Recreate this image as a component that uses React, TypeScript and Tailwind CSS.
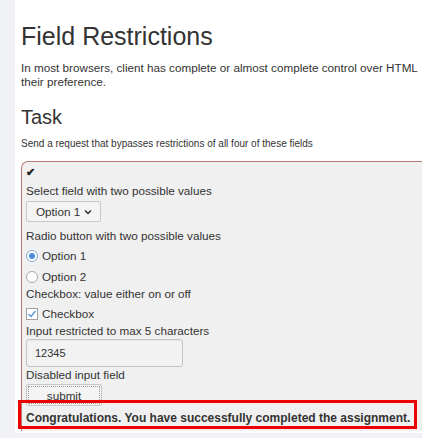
const font = { fontFamily: '"Liberation Sans", Arial, sans-serif' };

function Radio({ checked, label, first }: { checked?: boolean; label: string; first?: boolean }) {
  return (
    <div className={`flex h-[20px] items-center gap-[4px] ${first ? "mt-[2px]" : "mt-[1px]"}`}>
      <span
        className={`flex h-[12px] w-[12px] items-center justify-center rounded-full border bg-white ${
          checked ? "border-[#7aaee0]" : "border-[#a8a8a8]"
        }`}
      >
        {checked && <span className="h-[6px] w-[6px] rounded-full bg-[#4a90d9]" />}
      </span>
      <span>{label}</span>
    </div>
  );
}

export default function App() {
  return (
    <div className="flex h-[438px] w-[422px] overflow-hidden bg-[#f1f2f6]" style={font}>
      <div className="w-[15px] shrink-0" />
      <div className="relative h-[433px] flex-1 overflow-hidden rounded-bl-[4px] bg-white pl-[6px] text-[#333]">
        <h1 className="mt-[21px] text-[25px] font-normal leading-[30px] text-[#333]">Field Restrictions</h1>
        <p className="mt-[10px] whitespace-nowrap text-[11.7px] leading-[14px] text-[#333]">
          In most browsers, client has complete or almost complete control over HTML
          <br />
          their preference.
        </p>
        <h2 className="mt-[16px] text-[20px] font-normal leading-[24px] text-[#333]">Task</h2>
        <p className="mt-[8px] whitespace-nowrap text-[10px] leading-[14px]">
          Send a request that bypasses restrictions of all four of these fields
        </p>
        <div className="mt-[10px] w-[420px] rounded-tl-[7px] border border-r-0 border-b-0 border-[#b87878] bg-[#f0f0f0] pl-[4px] pt-[3px] text-[11.7px] leading-[16px]">
          <div className="h-[14px] text-[11px] font-bold leading-[14px] text-[#222]">✔</div>
          <div className="mt-[4px]">Select field with two possible values</div>
          <div className="mt-[2px] flex h-[21px] w-[75px] items-center gap-[4px] rounded-[2px] border border-[#c8c8c8] bg-[#f4f4f4] pl-[9px]">
            <span>Option 1</span>
            <svg width="8" height="6" viewBox="0 0 8 6">
              <path d="M1 1.5 L4 4.5 L7 1.5" fill="none" stroke="#333" strokeWidth="1.5" />
            </svg>
          </div>
          <div className="mt-[6px]">Radio button with two possible values</div>
          <Radio checked first label="Option 1" />
          <Radio label="Option 2" />
          <div className="-mt-[1px]">Checkbox: value either on or off</div>
          <div className="mt-[2px] flex h-[20px] items-center gap-[4px]">
            <span className="flex h-[12px] w-[12px] items-center justify-center border border-[#a0a0a0] bg-white">
              <svg width="10" height="10" viewBox="0 0 10 10">
                <path d="M1.5 5 L4 7.5 L8.5 2" fill="none" stroke="#4a90d9" strokeWidth="1.2" />
              </svg>
            </span>
            <span>Checkbox</span>
          </div>
          <div className="-mt-[1px]">Input restricted to max 5 characters</div>
          <div className="flex h-[28px] w-[157px] items-center rounded-[3px] border border-[#c4c4c4] bg-[#f2f2f2] pl-[8px] text-[11px] shadow-[inset_0_1px_1px_rgba(0,0,0,0.05)]">
            12345
          </div>
          <div>Disabled input field</div>
          <div className="mt-[1px] flex h-[22px] w-[76px] items-start justify-center rounded-[2px] border border-[#c8c8c8] bg-[#f4f4f4] p-[1px]">
            <div className="flex h-[18px] w-full justify-center border border-dotted border-[#999] pt-[1px] leading-[16px]">
              submit
            </div>
          </div>
          <div className="mt-[4px] h-[21px] whitespace-nowrap text-[12px] font-bold text-[#333]">
            Congratulations. You have successfully completed the assignment.
          </div>
        </div>
        <div className="absolute left-[3px] top-[400px] h-[29px] w-[399px] border-[3px] border-[#ee0000]" />
      </div>
    </div>
  );
}
